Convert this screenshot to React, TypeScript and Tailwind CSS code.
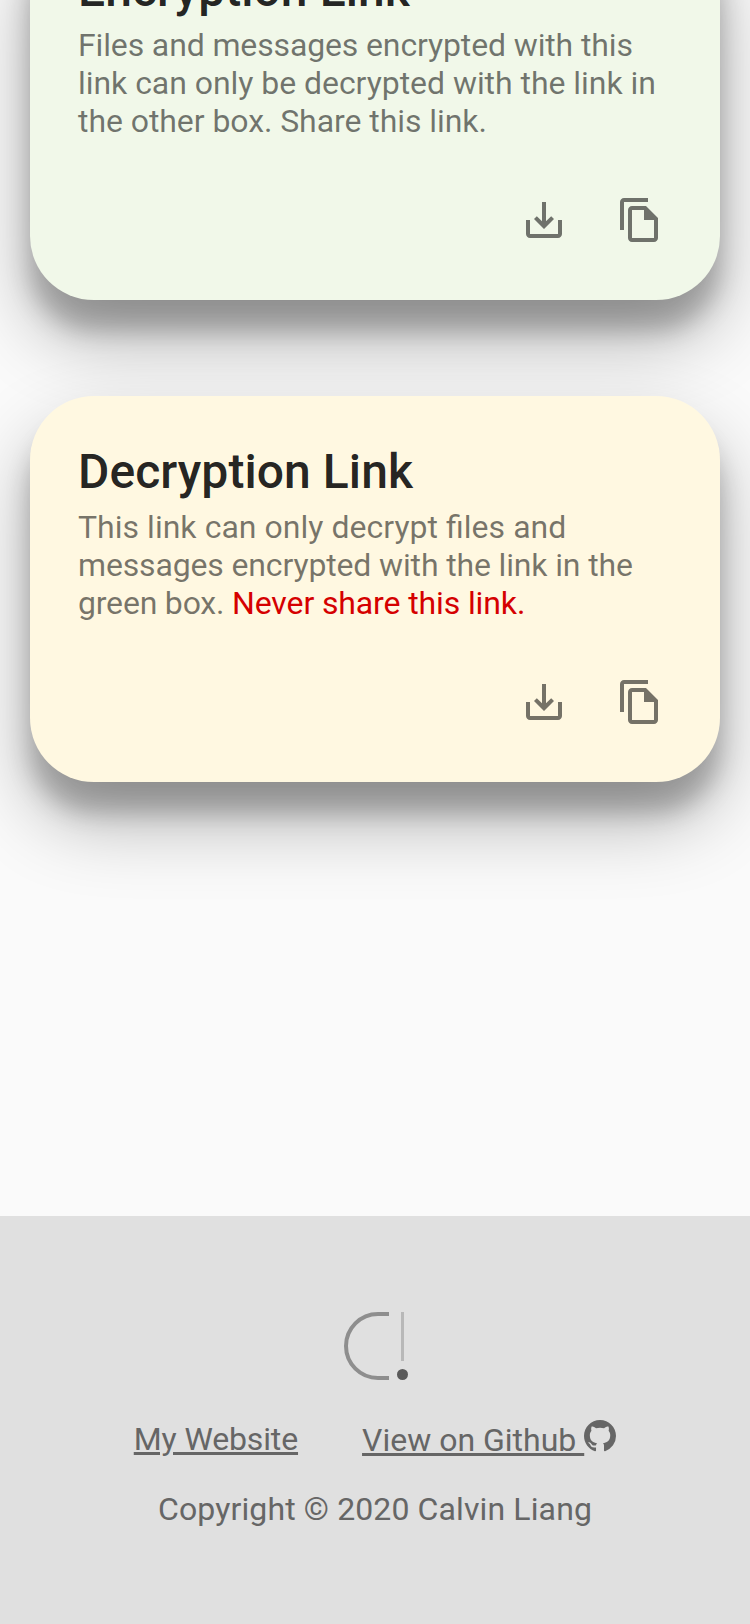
import type { ReactNode } from "react";

function DownloadIcon() {
  return (
    <svg viewBox="0 0 24 24" className="size-12 fill-current">
      <path d="M19 12v7H5v-7H3v7c0 1.1.9 2 2 2h14c1.1 0 2-.9 2-2v-7h-2zm-6 .67l2.59-2.58L17 11.5l-5 5-5-5 1.41-1.41L11 12.67V3h2z" />
    </svg>
  );
}

function CopyIcon() {
  return (
    <svg viewBox="0 0 24 24" className="size-12 fill-current">
      <path d="M16 1H4c-1.1 0-2 .9-2 2v14h2V3h12V1zm-1 4H8c-1.1 0-1.99.9-1.99 2L6 21c0 1.1.89 2 1.99 2H19c1.1 0 2-.9 2-2V11l-6-6zM8 21V7h6v5h5v9H8z" />
    </svg>
  );
}

function LinkCard({ title, color, children }: { title: string; color: string; children: ReactNode }) {
  return (
    <section
      className={`flex h-[386px] shrink-0 flex-col rounded-[64px] shadow-[0_38px_76px_rgba(0,0,0,0.3),0_30px_24px_rgba(0,0,0,0.22)] ${color}`}
    >
      <div className="px-12 pt-12">
        <h2 className="text-[48px] leading-[56px] font-medium tracking-[0.07px] text-black/87">{title}</h2>
        <p className="mt-2 text-[32px] leading-[38px] whitespace-nowrap text-black/54">{children}</p>
      </div>
      <div className="mt-auto flex justify-end px-8 pb-8 text-black/54">
        <button type="button" aria-label="Download" className="p-6">
          <DownloadIcon />
        </button>
        <button type="button" aria-label="Copy" className="p-6">
          <CopyIcon />
        </button>
      </div>
    </section>
  );
}

function Logo() {
  return (
    <svg viewBox="0 0 66 70" className="h-[70px] w-[66px] fill-none">
      <path d="M47 3H36a32 32 0 0 0 0 64h11" stroke="#8e8e8e" strokeWidth="4" />
      <path d="M60.5 1v49" stroke="#b8b8b8" strokeWidth="3" />
      <circle cx="60.5" cy="63.5" r="5.5" fill="#5a5a5a" />
    </svg>
  );
}

function GithubIcon() {
  return (
    <svg viewBox="0 0 16 16" className="size-8 fill-current">
      <path d="M8 0C3.58 0 0 3.58 0 8c0 3.54 2.29 6.53 5.47 7.59.4.07.55-.17.55-.38 0-.19-.01-.82-.01-1.49-2.01.37-2.53-.49-2.69-.94-.09-.23-.48-.94-.82-1.13-.28-.15-.68-.52-.01-.53.63-.01 1.08.58 1.23.82.72 1.21 1.87.87 2.33.66.07-.52.28-.87.51-1.07-1.78-.2-3.64-.89-3.64-3.95 0-.87.31-1.59.82-2.15-.08-.2-.36-1.02.08-2.12 0 0 .67-.21 2.2.82.64-.18 1.32-.27 2-.27s1.36.09 2 .27c1.53-1.04 2.2-.82 2.2-.82.44 1.1.16 1.92.08 2.12.51.56.82 1.27.82 2.15 0 3.07-1.87 3.75-3.65 3.95.29.25.54.73.54 1.48 0 1.07-.01 1.93-.01 2.2 0 .21.15.46.55.38A8.01 8.01 0 0 0 16 8c0-4.42-3.58-8-8-8z" />
    </svg>
  );
}

export default function App() {
  return (
    <div className="flex h-[1624px] w-[750px] flex-col overflow-hidden bg-[#fafafa] font-[Roboto,sans-serif]">
      <main className="-mt-[86px] flex h-[1302px] shrink-0 flex-col gap-24 px-[30px]">
        <LinkCard title="Encryption Link" color="bg-[#f1f8e9]">
          <span className="block tracking-[-0.135px]">Files and messages encrypted with this</span>
          <span className="block tracking-[-0.05px]">link can only be decrypted with the link in</span>
          <span className="block tracking-[-0.07px]">the other box. Share this link.</span>
        </LinkCard>
        <LinkCard title="Decryption Link" color="bg-[#fff8e1]">
          <span className="block [word-spacing:0.15px]">This link can only decrypt files and</span>
          <span className="block tracking-[-0.15px]">messages encrypted with the link in the</span>
          <span className="flex">
            <span className="tracking-[-0.2px] whitespace-pre">green box. </span>
            <span className="tracking-[-0.12px] text-[#d50000]">Never share this link.</span>
          </span>
        </LinkCard>
      </main>
      <footer className="flex flex-1 flex-col items-center bg-[#e0e0e0] pt-[95px] text-[32px] leading-[38px] text-[#666]">
        <Logo />
        <div className="mt-[39px] flex items-start gap-16">
          <a className="tracking-[-0.13px] underline">My Website</a>
          <a className="flex items-start">
            <span className="mt-px whitespace-pre underline">View on Github </span>
            <GithubIcon />
          </a>
        </div>
        <p className="mt-[31px] tracking-[0.12px]">Copyright © 2020 Calvin Liang</p>
      </footer>
    </div>
  );
}
